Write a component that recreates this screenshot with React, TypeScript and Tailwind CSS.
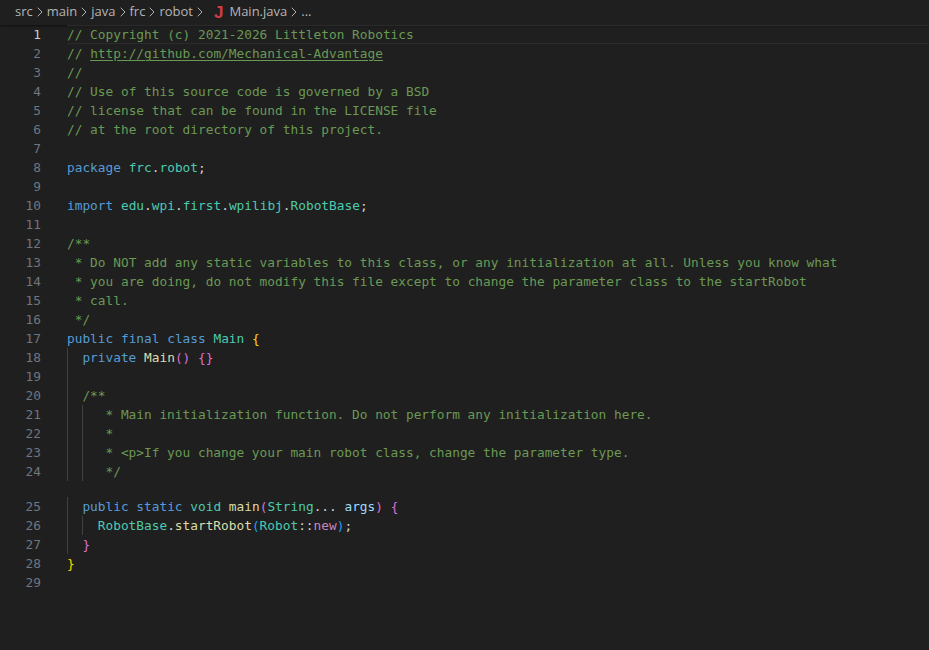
import { ChevronRight } from 'lucide-react';

type Seg = [string, string];

const C = '#6a9955';
const K = '#569cd6';
const T = '#4ec9b0';
const F = '#dcdcaa';
const V = '#9cdcfe';
const D = '#d4d4d4';
const Y = '#ffd700';
const P = '#da70d6';
const B = '#179fff';
const M = '#c586c0';

// indent = number of guide columns at the start of the line
const LINES: { n: number; indent?: number; segs: Seg[]; gapAfter?: boolean }[] = [
  { n: 1, segs: [[C, '// Copyright (c) 2021-2026 Littleton Robotics']] },
  { n: 2, segs: [[C, '// '], ['link', 'http://github.com/Mechanical-Advantage']] },
  { n: 3, segs: [[C, '//']] },
  { n: 4, segs: [[C, '// Use of this source code is governed by a BSD']] },
  { n: 5, segs: [[C, '// license that can be found in the LICENSE file']] },
  { n: 6, segs: [[C, '// at the root directory of this project.']] },
  { n: 7, segs: [] },
  { n: 8, segs: [[K, 'package'], [D, ' '], [T, 'frc'], [D, '.'], [T, 'robot'], [D, ';']] },
  { n: 9, segs: [] },
  { n: 10, segs: [[K, 'import'], [D, ' '], [T, 'edu'], [D, '.'], [T, 'wpi'], [D, '.'], [T, 'first'], [D, '.'], [T, 'wpilibj'], [D, '.'], [T, 'RobotBase'], [D, ';']] },
  { n: 11, segs: [] },
  { n: 12, segs: [[C, '/**']] },
  { n: 13, segs: [[C, ' * Do NOT add any static variables to this class, or any initialization at all. Unless you know what']] },
  { n: 14, segs: [[C, ' * you are doing, do not modify this file except to change the parameter class to the startRobot']] },
  { n: 15, segs: [[C, ' * call.']] },
  { n: 16, segs: [[C, ' */']] },
  { n: 17, segs: [[K, 'public'], [D, ' '], [K, 'final'], [D, ' '], [K, 'class'], [D, ' '], [T, 'Main'], [D, ' '], [Y, '{']] },
  { n: 18, indent: 1, segs: [[K, 'private'], [D, ' '], [F, 'Main'], [P, '()'], [D, ' '], [P, '{}']] },
  { n: 19, indent: 1, segs: [] },
  { n: 20, indent: 1, segs: [[C, '/**']] },
  { n: 21, indent: 2, segs: [[C, ' * Main initialization function. Do not perform any initialization here.'.slice(0)]] },
  { n: 22, indent: 2, segs: [[C, ' *']] },
  { n: 23, indent: 2, segs: [[C, ' * <p>If you change your main robot class, change the parameter type.']] },
  { n: 24, indent: 2, segs: [[C, ' */']], gapAfter: true },
  { n: 25, indent: 1, segs: [[K, 'public'], [D, ' '], [K, 'static'], [D, ' '], [T, 'void'], [D, ' '], [F, 'main'], [P, '('], [T, 'String'], [D, '... '], [V, 'args'], [P, ')'], [D, ' '], [P, '{']] },
  { n: 26, indent: 2, segs: [[T, 'RobotBase'], [D, '.'], [F, 'startRobot'], [B, '('], [T, 'Robot'], [D, '::'], [M, 'new'], [B, ')'], [D, ';']] },
  { n: 27, indent: 1, segs: [[P, '}']] },
  { n: 28, segs: [[Y, '}']] },
  { n: 29, segs: [] },
];

function Chevron() {
  return <ChevronRight size={16} strokeWidth={1.25} className="mx-[-1px] shrink-0 text-[#cccccc]" />;
}

export default function App() {
  const crumbs = ['src', 'main', 'java', 'frc', 'robot'];
  return (
    <div className="h-[650px] w-[929px] overflow-hidden bg-[#1f1f1f] font-['DejaVu_Sans_Mono',monospace] text-[12.8px]">
      <div className="flex h-[25px] items-center pb-[1px] pl-[15px] font-['Open_Sans',sans-serif] text-[13px] text-[#b5b5b5] shadow-[0_1px_2px_#111111]">
        {crumbs.map(c => (
          <span key={c} className="flex items-center">
            {c}
            <Chevron />
          </span>
        ))}
        <span className="ml-[7px] mr-[6px] font-['Liberation_Sans',sans-serif] text-[17px] font-bold leading-none text-[#cc3e44]">J</span>
        <span>Main.java</span>
        <Chevron />
        <span>...</span>
      </div>
      <div className="pt-[0px]">
        {LINES.map(line => (
          <div key={line.n} className={line.gapAfter ? 'mb-[16px]' : ''}>
            <div className="flex h-[19px] items-center leading-[19px]">
              <span className={`w-[41px] shrink-0 text-right ${line.n === 1 ? 'text-[#cccccc]' : 'text-[#6e7681]'}`}>{line.n}</span>
              <div className={`ml-[26px] flex h-full flex-1 whitespace-pre ${line.n === 1 ? 'border-y border-[#2b2b2b] leading-[17px]' : ''}`}>
                {Array.from({ length: line.indent ?? 0 }).map((_, i) => (
                  <span key={i} className="h-[19px] w-[15.4px] shrink-0 border-l border-[#404040]" />
                ))}
                <span>
                  {line.segs.map(([color, text], i) =>
                    color === 'link' ? (
                      <span key={i} className="text-[#6a9955] underline underline-offset-2">{text}</span>
                    ) : (
                      <span key={i} style={{ color }}>{text}</span>
                    ),
                  )}
                </span>
              </div>
            </div>
          </div>
        ))}
      </div>
    </div>
  );
}
